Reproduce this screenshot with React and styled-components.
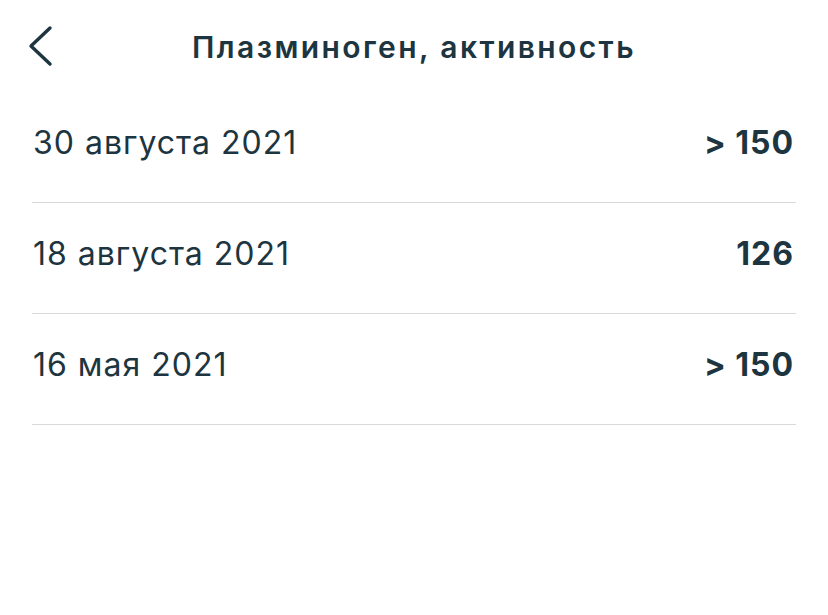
import styled, { createGlobalStyle } from "styled-components";

const GlobalStyle = createGlobalStyle`
  html, body {
    margin: 0;
    padding: 0;
    background: #ffffff;
  }
  body {
    font-family: Inter, "Noto Sans", "Liberation Sans", sans-serif;
    color: #1d3540;
  }
`;

const Screen = styled.div`
  width: 828px;
  height: 615px;
  background: #ffffff;
`;

const Header = styled.div`
  height: 92px;
  display: grid;
  grid-template-columns: 100px 1fr 100px;
  align-items: center;
`;

const BackButton = styled.button`
  border: none;
  background: none;
  padding: 0 0 0 26px;
  height: 92px;
  display: flex;
  align-items: center;
  color: #1d3540;
  cursor: pointer;
`;

const Title = styled.h1`
  margin: 0;
  text-align: center;
  font-size: 30px;
  font-weight: 600;
  letter-spacing: 2.4px;
  padding-top: 2px;
`;

const List = styled.div`
  padding: 0 32px;
`;

const Row = styled.div`
  height: 100px;
  padding-bottom: 10px;
  display: flex;
  align-items: center;
  justify-content: space-between;
  border-bottom: 1px solid #d7d9da;
`;

const DateText = styled.span`
  font-size: 32px;
  font-weight: 400;
  letter-spacing: 1px;
  padding-left: 1px;
`;

const Value = styled.span`
  font-size: 32px;
  font-weight: 700;
  letter-spacing: 1px;
  padding-right: 2px;
`;

const rows = [
  { date: "30 августа 2021", value: "> 150" },
  { date: "18 августа 2021", value: "126" },
  { date: "16 мая 2021", value: "> 150" },
];

const App = () => {
  return (
    <Screen>
      <GlobalStyle />
      <Header>
        <BackButton aria-label="Назад">
          <svg width="28" height="42" viewBox="0 0 28 42" fill="none">
            <path
              d="M24 3 L5 21 L24 39"
              stroke="currentColor"
              strokeWidth="3.4"
              strokeLinecap="round"
              strokeLinejoin="round"
            />
          </svg>
        </BackButton>
        <Title>Плазминоген, активность</Title>
        <div />
      </Header>
      <List>
        {rows.map((r) => (
          <Row key={r.date}>
            <DateText>{r.date}</DateText>
            <Value>{r.value}</Value>
          </Row>
        ))}
      </List>
    </Screen>
  );
};

export default App;
